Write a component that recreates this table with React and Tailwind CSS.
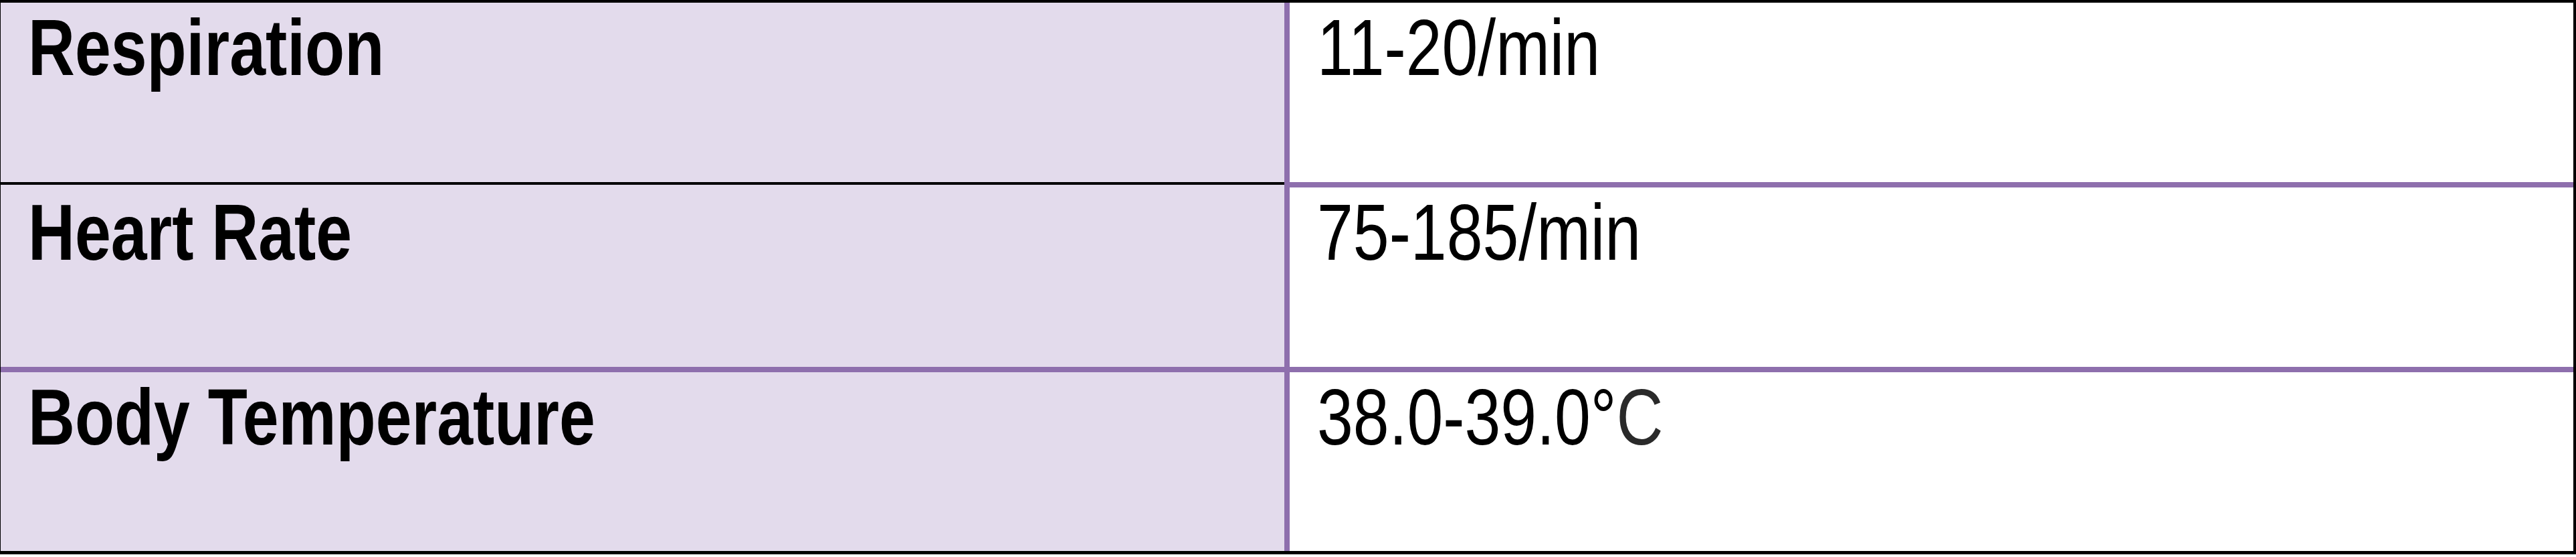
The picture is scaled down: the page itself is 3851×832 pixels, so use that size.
const rows = [
  { label: "Respiration", value: "11-20/min" },
  { label: "Heart Rate", value: "75-185/min" },
  { label: "Body Temperature", value: "38.0-39.0°", unit: "C" },
];

const font = { fontFamily: '"Liberation Sans", Arial, sans-serif' };

export default function App() {
  return (
    <div className="w-[3851px] h-[832px] bg-white" style={font}>
      <div className="flex border-t-4 border-l border-r-4 border-b-[5px] border-black">
        {/* label column */}
        <div className="flex flex-col w-[1919px] bg-[#e3dbec] text-black">
          <div className="h-[272px] border-b-4 border-black pt-[8px] pl-[41px]">
            <span className="inline-block origin-left scale-x-[0.82] text-[118px] leading-none font-bold whitespace-nowrap">
              {rows[0].label}
            </span>
          </div>
          <div className="h-[280px] border-b-8 border-[#8e6fad] pt-[12px] pl-[41px]">
            <span className="inline-block origin-left scale-x-[0.82] text-[118px] leading-none font-bold whitespace-nowrap">
              {rows[1].label}
            </span>
          </div>
          <div className="h-[267px] pt-[8px] pl-[41px]">
            <span className="inline-block origin-left scale-x-[0.82] text-[118px] leading-none font-bold whitespace-nowrap">
              {rows[2].label}
            </span>
          </div>
        </div>

        {/* value column */}
        <div className="flex flex-col w-[1927px] border-l-8 border-[#8e6fad] bg-white text-black">
          <div className="h-[276px] border-b-8 border-[#8e6fad] pt-[8px] pl-[41px]">
            <span className="inline-block origin-left scale-x-[0.82] text-[118px] leading-none whitespace-nowrap">
              {rows[0].value}
            </span>
          </div>
          <div className="h-[276px] border-b-8 border-[#8e6fad] pt-[8px] pl-[41px]">
            <span className="inline-block origin-left scale-x-[0.82] text-[118px] leading-none whitespace-nowrap">
              {rows[1].value}
            </span>
          </div>
          <div className="h-[267px] pt-[8px] pl-[41px]">
            <span className="inline-block origin-left scale-x-[0.82] text-[118px] leading-none whitespace-nowrap">
              {rows[2].value}
              <span className="text-[#2a2a2a]">{rows[2].unit}</span>
            </span>
          </div>
        </div>
      </div>
    </div>
  );
}
